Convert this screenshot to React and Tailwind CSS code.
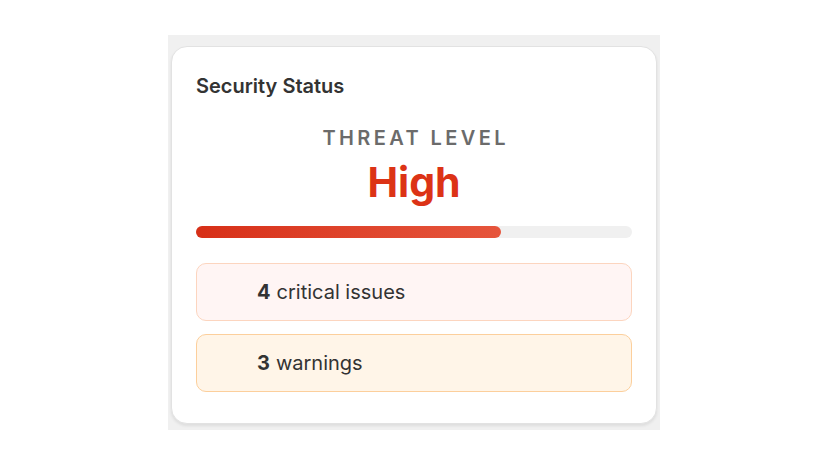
import React from "react";

function IssueRow({ count, label, tone }) {
  const styles =
    tone === "critical"
      ? "border-[#fcd5bf] bg-[#fff5f4]"
      : "border-[#fccf9c] bg-[#fff5e8]";

  return (
    <div
      className={`flex h-[58px] items-center rounded-[10px] border-[1.5px] pl-[60px] text-[20px] text-[#333333] ${styles}`}
    >
      <span className="font-bold">{count}</span>
      <span className="ml-[6px]">{label}</span>
    </div>
  );
}

export default function App() {
  const threatPercent = 70;

  return (
    <div
      className="flex h-[466px] w-full justify-center bg-white pt-[35px]"
      style={{ fontFamily: "Inter, 'Noto Sans', sans-serif" }}
    >
      <div className="h-[395px] w-[492px] bg-[#f0f0f0] px-[3px] pt-[11px]">
        <div className="h-[378px] rounded-[16px] border border-[#e2e2e2] bg-white px-6 pt-6 shadow-[0_2px_3px_rgba(0,0,0,0.08)]">
          <h2 className="text-[20px] leading-[31px] font-semibold text-[#333333]">
            Security Status
          </h2>

          <div className="mt-[22px] pl-[0.17em] text-center text-[20px] leading-[28px] font-semibold tracking-[0.17em] text-[#6b6b6b]">
            THREAT LEVEL
          </div>
          <div className="mt-[6px] text-center text-[41px] leading-[48px] font-bold text-[#dc3316]">
            High
          </div>

          <div className="mt-[20px] h-[12px] w-full rounded-full bg-[#f0f0f0]">
            <div
              className="h-full rounded-full bg-gradient-to-r from-[#d72f17] to-[#e6553c]"
              style={{ width: `${threatPercent}%` }}
            />
          </div>

          <div className="mt-[25px] flex flex-col gap-[13px]">
            <IssueRow count={4} label="critical issues" tone="critical" />
            <IssueRow count={3} label="warnings" tone="warning" />
          </div>
        </div>
      </div>
    </div>
  );
}
